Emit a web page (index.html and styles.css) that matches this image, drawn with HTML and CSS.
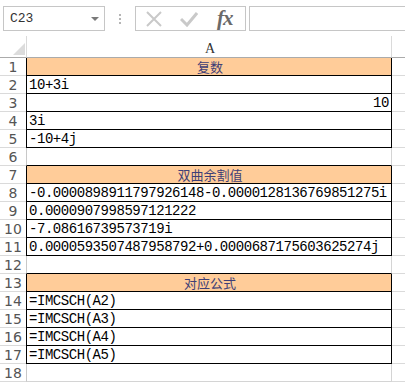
FILE: index.html
```html
<!DOCTYPE html>
<html>
<head>
    <meta charset="utf-8">
    <link rel="stylesheet" href="styles.css">
</head>
<body>
<div class="toolbar">
    <div class="name-box">
        <span>C23</span>
        <span class="drop"></span>
    </div>
    <div class="grip"><i></i><i></i><i></i></div>
    <div class="fx-box">
        <svg class="ico" width="18" height="16" viewBox="0 0 18 16"><path d="M2 1 L16 15 M16 1 L2 15" stroke="#c9c9c9" stroke-width="2" fill="none"/></svg>
        <svg class="ico" width="18" height="16" viewBox="0 0 18 16"><path d="M1 8 L7 14 L17 2" stroke="#c9c9c9" stroke-width="3" fill="none"/></svg>
        <span class="fx">fx</span>
    </div>
    <div class="input-box"></div>
</div>
<div class="sheet">
    <div class="row head">
        <div class="rh corner"><span class="tri"></span></div>
        <div class="cell colname">A</div>
        <div class="rest"></div>
    </div>
    <div class="row"><div class="rh">1</div><div class="cell box title">复数</div><div class="rest"></div></div>
    <div class="row"><div class="rh">2</div><div class="cell box">10+3i</div><div class="rest"></div></div>
    <div class="row"><div class="rh">3</div><div class="cell box num">10</div><div class="rest"></div></div>
    <div class="row"><div class="rh">4</div><div class="cell box">3i</div><div class="rest"></div></div>
    <div class="row"><div class="rh">5</div><div class="cell box">-10+4j</div><div class="rest"></div></div>
    <div class="row"><div class="rh">6</div><div class="cell gap"></div><div class="rest"></div></div>
    <div class="row"><div class="rh">7</div><div class="cell box title">双曲余割值</div><div class="rest"></div></div>
    <div class="row"><div class="rh">8</div><div class="cell box">-0.0000898911797926148-0.0000128136769851275i</div><div class="rest"></div></div>
    <div class="row"><div class="rh">9</div><div class="cell box">0.0000907998597121222</div><div class="rest"></div></div>
    <div class="row"><div class="rh">10</div><div class="cell box">-7.08616739573719i</div><div class="rest"></div></div>
    <div class="row"><div class="rh">11</div><div class="cell box">0.0000593507487958792+0.0000687175603625274j</div><div class="rest"></div></div>
    <div class="row"><div class="rh">12</div><div class="cell gap"></div><div class="rest"></div></div>
    <div class="row"><div class="rh">13</div><div class="cell box title">对应公式</div><div class="rest"></div></div>
    <div class="row"><div class="rh">14</div><div class="cell box">=IMCSCH(A2)</div><div class="rest"></div></div>
    <div class="row"><div class="rh">15</div><div class="cell box">=IMCSCH(A3)</div><div class="rest"></div></div>
    <div class="row"><div class="rh">16</div><div class="cell box">=IMCSCH(A4)</div><div class="rest"></div></div>
    <div class="row"><div class="rh">17</div><div class="cell box">=IMCSCH(A5)</div><div class="rest"></div></div>
    <div class="row"><div class="rh">18</div><div class="cell"></div><div class="rest"></div></div>
</div>
</body>
</html>
```

FILE: styles.css
```css
body {
    margin: 0;
    background: #fff;
    overflow: hidden;
    font-family: "Liberation Mono", "Noto Sans CJK SC", monospace;
}

.toolbar {
    height: 36px;
    display: flex;
    align-items: flex-start;
    padding-top: 6px;
    box-sizing: border-box;
}

.name-box {
    width: 102px;
    height: 25px;
    margin-left: 3px;
    box-sizing: border-box;
    border: 1px solid #c6c6c6;
    display: flex;
    align-items: center;
    justify-content: space-between;
    padding: 0 5px 0 6px;
    font-size: 13px;
    color: #333;
}

.drop {
    width: 0;
    height: 0;
    border-left: 4px solid transparent;
    border-right: 4px solid transparent;
    border-top: 4px solid #7a7a7a;
}

.grip {
    width: 30px;
    height: 25px;
    display: flex;
    flex-direction: column;
    align-items: center;
    justify-content: center;
    gap: 2px;
}

.grip i {
    width: 2px;
    height: 2px;
    background: #b5b5b5;
}

.fx-box {
    width: 111px;
    height: 25px;
    box-sizing: border-box;
    border: 1px solid #c6c6c6;
    display: flex;
    align-items: center;
    padding-left: 9px;
    gap: 17px;
}

.fx {
    font-family: "Liberation Serif", serif;
    font-style: italic;
    font-weight: bold;
    font-size: 21px;
    color: #6a6a6a;
    letter-spacing: -1px;
    margin-left: 2px;
}

.input-box {
    flex: 1;
    height: 25px;
    margin-left: 3px;
    box-sizing: border-box;
    border: 1px solid #c6c6c6;
    border-right: none;
}

.row {
    display: flex;
    height: 18px;
}

.row.head {
    height: 22px;
}

.rh {
    width: 26px;
    box-sizing: border-box;
    border-bottom: 1px solid #dadada;
    font-family: "DejaVu Sans", sans-serif;
    font-size: 14px;
    color: #555;
    text-align: center;
    line-height: 18px;
}

.head .rh {
    border-bottom: 1px solid #ababab;
    position: relative;
}

.tri {
    position: absolute;
    right: 1px;
    bottom: 2px;
    width: 0;
    height: 0;
    border-left: 12px solid transparent;
    border-bottom: 12px solid #dcdcdc;
}

.cell {
    width: 366px;
    box-sizing: border-box;
    border-left: 1px solid #c8c8c8;
    border-right: 1px solid #d4d4d4;
    border-bottom: 1px solid #d4d4d4;
    padding-left: 2px;
    font-size: 14px;
    letter-spacing: -0.45px;
    line-height: 19px;
    color: #000;
    white-space: nowrap;
}

.head .cell {
    border-left-color: #dadada;
    border-right-color: #dadada;
    border-bottom: 1px solid #ababab;
    text-align: center;
    font-family: "Liberation Serif", serif;
    font-size: 14px;
    letter-spacing: 0;
    color: #333;
    line-height: 26px;
}

.cell.box {
    border-left-color: #000;
    border-right-color: #000;
    border-bottom-color: #000;
}

.cell.gap {
    border-bottom-color: #000;
}

.cell.title {
    background: #ffcc99;
    color: #3f3f76;
    text-align: center;
    font-family: "Noto Sans CJK SC", sans-serif;
    font-size: 13px;
    letter-spacing: 0;
    line-height: 17px;
}

.cell.num {
    text-align: right;
    padding-right: 2px;
}

.rest {
    flex: 1;
    border-bottom: 1px solid #dadada;
}

.head .rest {
    border-bottom: 1px solid #ababab;
}
```
